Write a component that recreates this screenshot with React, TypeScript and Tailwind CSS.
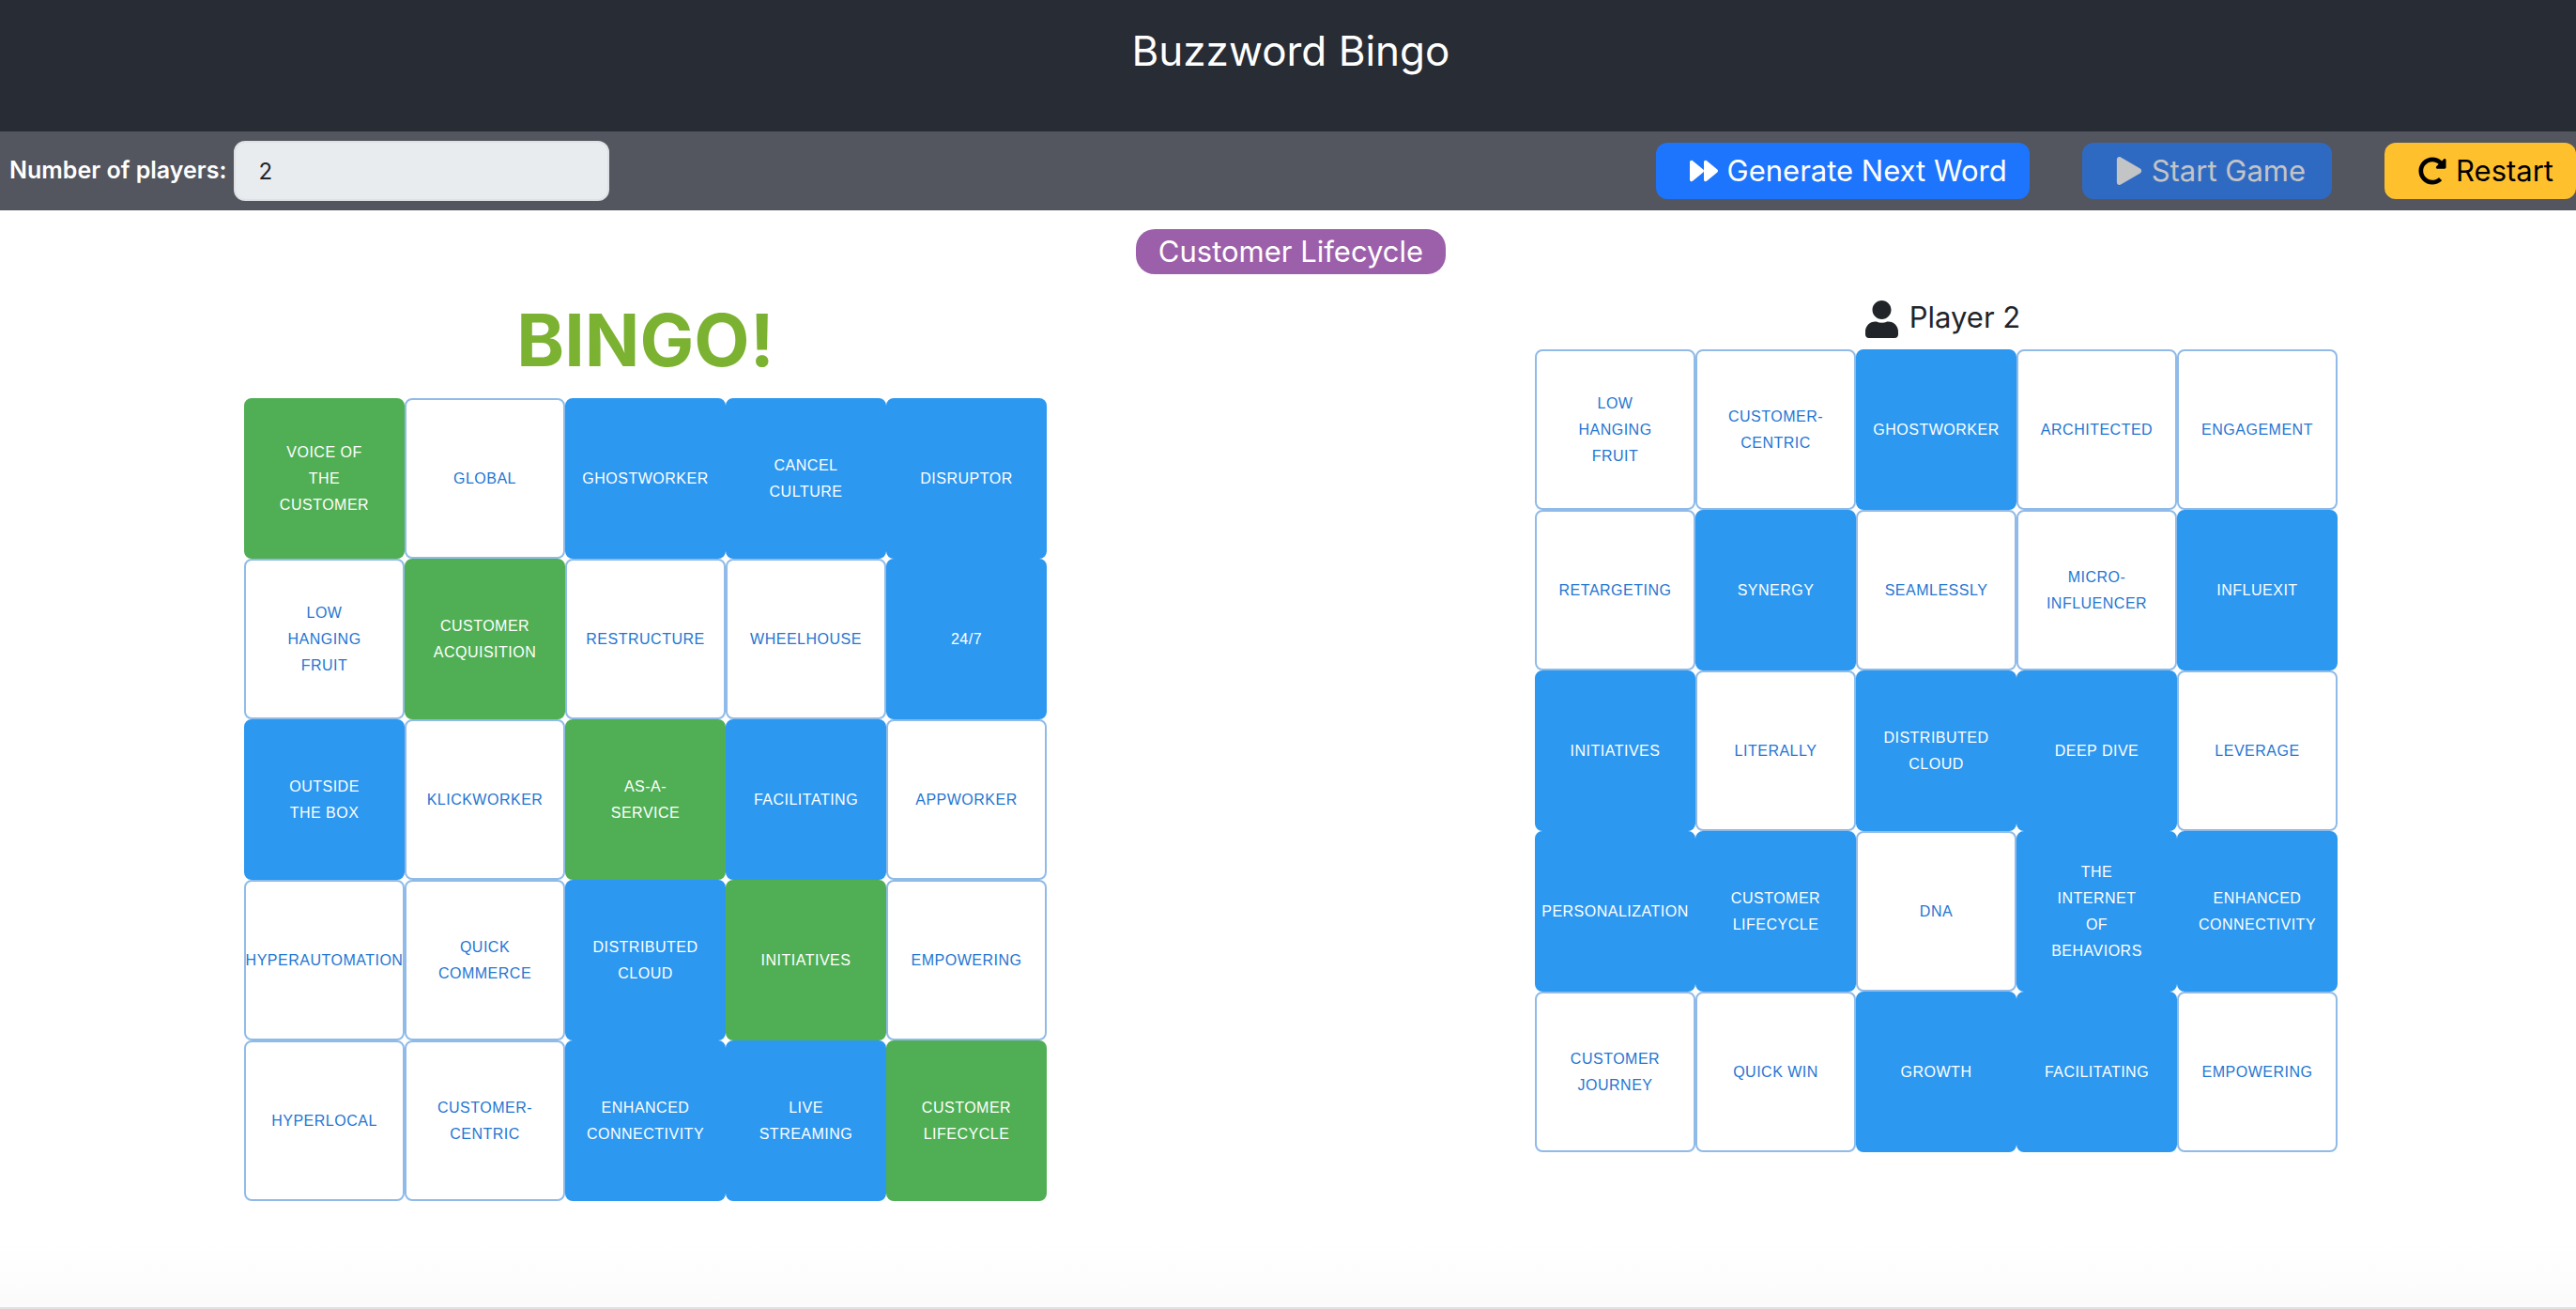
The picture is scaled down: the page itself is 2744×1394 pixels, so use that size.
import { FaUser, FaRedoAlt, FaForward, FaPlay } from "react-icons/fa";

type Mark = "open" | "hit" | "win";
type Cell = [string, Mark?];

const boards: { name: string; bingo: boolean; cells: Cell[] }[] = [
  {
    name: "Player 1",
    bingo: true,
    cells: [
      ["Voice of the Customer", "win"], ["Global"], ["Ghostworker", "hit"], ["Cancel Culture", "hit"], ["Disruptor", "hit"],
      ["Low Hanging Fruit"], ["Customer Acquisition", "win"], ["Restructure"], ["Wheelhouse"], ["24/7", "hit"],
      ["Outside the Box", "hit"], ["Klickworker"], ["As-a-Service", "win"], ["Facilitating", "hit"], ["Appworker"],
      ["Hyperautomation"], ["Quick Commerce"], ["Distributed Cloud", "hit"], ["Initiatives", "win"], ["Empowering"],
      ["Hyperlocal"], ["Customer-Centric"], ["Enhanced Connectivity", "hit"], ["Live Streaming", "hit"], ["Customer Lifecycle", "win"],
    ],
  },
  {
    name: "Player 2",
    bingo: false,
    cells: [
      ["Low Hanging Fruit"], ["Customer-Centric"], ["Ghostworker", "hit"], ["Architected"], ["Engagement"],
      ["Retargeting"], ["Synergy", "hit"], ["Seamlessly"], ["Micro-Influencer"], ["Influexit", "hit"],
      ["Initiatives", "hit"], ["Literally"], ["Distributed Cloud", "hit"], ["Deep Dive", "hit"], ["Leverage"],
      ["Personalization", "hit"], ["Customer Lifecycle", "hit"], ["DNA"], ["The Internet of Behaviors", "hit"], ["Enhanced Connectivity", "hit"],
      ["Customer Journey"], ["Quick Win"], ["Growth", "hit"], ["Facilitating", "hit"], ["Empowering"],
    ],
  },
];

const markStyles: Record<Mark, string> = {
  open: "border-[#90bbe8] bg-white text-[#1f76d2]",
  hit: "border-[#2c98f0] bg-[#2c98f0] text-white",
  win: "border-[#50af55] bg-[#50af55] text-white",
};

function Board({ name, bingo, cells }: (typeof boards)[number]) {
  return (
    <section className="flex flex-col items-center">
      {bingo ? (
        <h2 className="mt-8 mb-2 text-[77px] leading-[108px] font-bold text-[#7cb232]">BINGO!</h2>
      ) : (
        <h2 className="mt-8 mb-1 flex h-[60px] items-center gap-3 pl-3.5 text-[31px] leading-10 text-[#212529]">
          <FaUser className="mt-1 h-10 w-[35px]" />
          {name}
        </h2>
      )}
      <div className="grid grid-cols-5">
        {cells.map(([word, mark = "open"]) => (
          <button
            key={word}
            type="button"
            className={`flex h-[171px] w-[171px] items-center justify-center rounded-lg border-2 px-8 text-center font-['Liberation_Sans',sans-serif] text-base leading-7 tracking-[0.5px] uppercase ${markStyles[mark]}`}
          >
            {word}
          </button>
        ))}
      </div>
    </section>
  );
}

export default function App() {
  return (
    <div className="flex min-h-screen flex-col overflow-hidden border-b-2 border-[#e2e2e2] bg-linear-to-t from-[#fbfbfb] to-white to-5% font-[Inter,sans-serif]">
      <div className="-mr-[6px]">
        <header className="h-[140px] bg-[#282c34] pt-6 text-center">
          <h1 className="text-[44px] leading-[60px] text-white">Buzzword Bingo</h1>
        </header>
        <div className="flex h-[84px] items-center bg-[#53565e] pr-[6px] pl-[10px]">
          <label htmlFor="players" className="text-[25px] font-semibold text-white">
            Number of players:
          </label>
          <input
            id="players"
            defaultValue="2"
            className="ml-2 h-16 w-[400px] rounded-xl border-2 border-[#dee2e6] bg-[#e9ecef] px-6 text-2xl text-[#212529]"
          />
          <div className="ml-auto flex gap-14 text-[31px]">
            <button type="button" className="flex h-[60px] items-center gap-2.5 rounded-xl bg-[#1c75fc] pr-6 pl-9 text-white">
              <FaForward className="size-[30px]" />
              Generate Next Word
            </button>
            <button type="button" disabled className="flex h-[60px] items-center gap-2.5 rounded-xl bg-[#2f6ac2] pr-7 pl-9 text-[#c3c4c6]">
              <FaPlay className="h-[30px] w-7" />
              Start Game
            </button>
            <button type="button" className="flex h-[60px] items-center gap-2.5 rounded-xl bg-[#ffc02e] pr-6 pl-9 text-black">
              <FaRedoAlt className="size-[30px]" />
              Restart
            </button>
          </div>
        </div>
        <main>
          <div className="flex justify-center pt-5">
            <span className="rounded-[20px] bg-[#9c60aa] px-6 text-[31px] leading-[48px] text-white">Customer Lifecycle</span>
          </div>
          <div className="-mt-4 grid grid-cols-2 items-start">
            {boards.map((board) => (
              <Board key={board.name} {...board} />
            ))}
          </div>
        </main>
      </div>
    </div>
  );
}
